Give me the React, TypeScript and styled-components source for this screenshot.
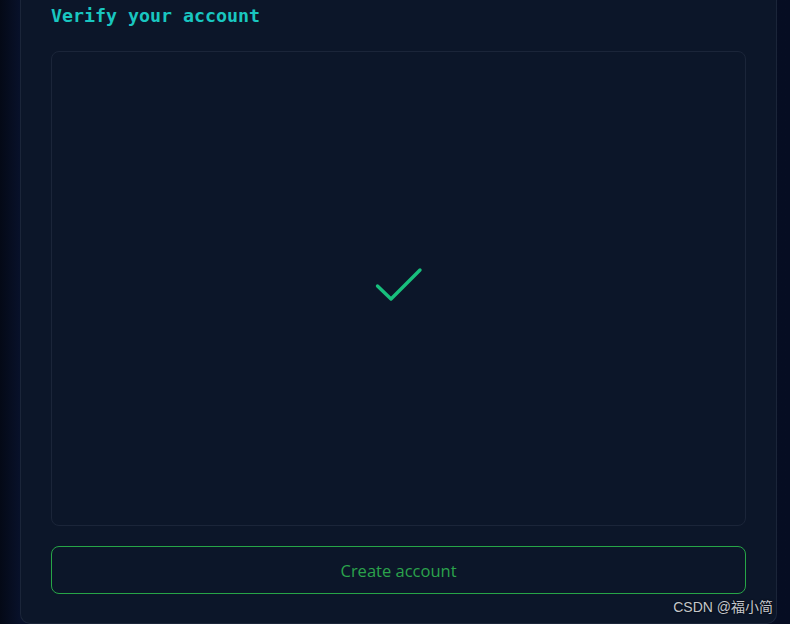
import React from "react";
import styled, { createGlobalStyle } from "styled-components";

const GlobalStyle = createGlobalStyle`
  html, body {
    margin: 0;
    padding: 0;
    background: #050b1b;
    overflow: hidden;
  }
  #root {
    min-height: 624px;
  }
`;

const Page = styled.div`
  position: relative;
  height: 624px;
  box-sizing: border-box;
  padding: 0 13px 1px 20px;
  background: linear-gradient(90deg, #040916 0%, #08112a 20px, #060d22 100%);
  display: flex;
  flex-direction: column;
`;

const Card = styled.section`
  box-sizing: border-box;
  width: 757px;
  background: #0c1629;
  border: 1px solid #1b2539;
  border-top: none;
  border-radius: 0 0 10px 10px;
  padding: 1px 30px 29px 30px;
  display: flex;
  flex-direction: column;
`;

const Title = styled.h2`
  margin: 0 0 20px 0;
  font-family: "DejaVu Sans Mono", "Liberation Mono", monospace;
  font-weight: bold;
  font-size: 18.3px;
  line-height: 30px;
  color: #19c6c0;
`;

const Preview = styled.div`
  box-sizing: border-box;
  height: 475px;
  border: 1px solid #1b2539;
  border-radius: 8px;
  display: flex;
  align-items: center;
  justify-content: center;
  padding-bottom: 8px;
`;

const CreateButton = styled.button`
  box-sizing: border-box;
  margin-top: 20px;
  height: 48px;
  width: 100%;
  background: transparent;
  border: 1px solid #27a547;
  border-radius: 8px;
  color: #2ba34c;
  font-family: "Open Sans", "Noto Sans", sans-serif;
  font-size: 16.5px;
  cursor: pointer;
`;

const Watermark = styled.div`
  position: absolute;
  right: 17px;
  bottom: 8px;
  font-family: "Liberation Sans", "Noto Sans CJK SC", sans-serif;
  font-size: 14px;
  color: #c4c7cc;
  text-shadow: 0 0 2px #000;
`;

export default function App() {
  return (
    <>
      <GlobalStyle />
      <Page>
        <Card>
          <Title>Verify your account</Title>
          <Preview>
            <svg width="48" height="36" viewBox="0 0 48 36" fill="none">
              <polyline
                points="2.5,19 16,32 45,3"
                stroke="#18bf7d"
                strokeWidth="3.4"
                strokeLinecap="round"
                strokeLinejoin="round"
              />
            </svg>
          </Preview>
          <CreateButton>Create account</CreateButton>
        </Card>
        <Watermark>CSDN @福小简</Watermark>
      </Page>
    </>
  );
}
